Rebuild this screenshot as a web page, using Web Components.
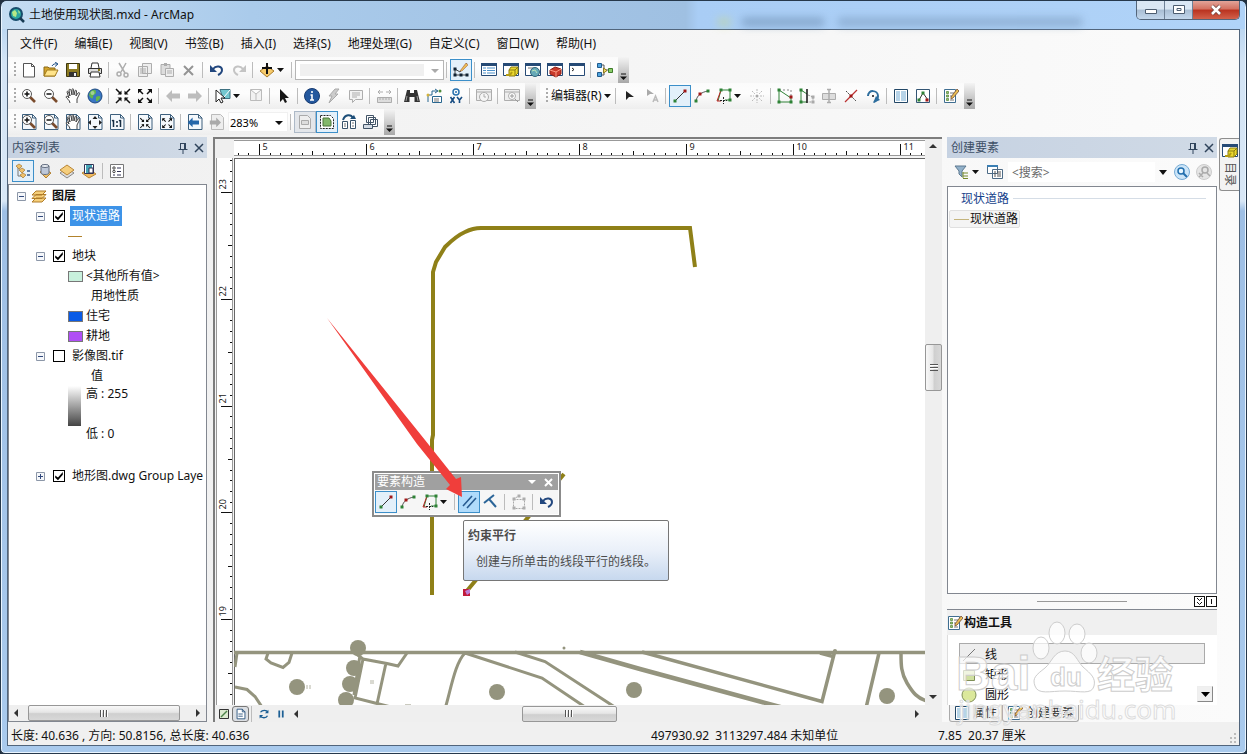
<!DOCTYPE html>
<html lang="zh-CN">
<head>
<meta charset="utf-8">
<title>土地使用现状图.mxd - ArcMap</title>
<style>
    html, body {
        margin: 0;
        height: 100%;
    }

    body {
        --line: #828790;
        --hot: #3c8fc9;
        --hot-bg: #e3f0fa;
        background: #22303f;
        color: #111;
        font: 12px/16px "Noto Sans", "Noto Sans CJK SC", sans-serif;
        overflow: hidden;
    }
</style>
</head>
<body>
<app-window heading="土地使用现状图.mxd - ArcMap">
    <menu-bar slot="menu" items="文件(F),编辑(E),视图(V),书签(B),插入(I),选择(S),地理处理(G),自定义(C),窗口(W),帮助(H)"></menu-bar>

    <tool-row slot="bars">
        <tool-bar>
            <tool-button icon="new" label="新建"></tool-button>
            <tool-button icon="open" label="打开"></tool-button>
            <tool-button icon="save" label="保存"></tool-button>
            <tool-button icon="print" label="打印"></tool-button>
            <tool-sep></tool-sep>
            <tool-button icon="cut" label="剪切"></tool-button>
            <tool-button icon="copy" label="复制"></tool-button>
            <tool-button icon="paste" label="粘贴"></tool-button>
            <tool-button icon="delete" label="删除"></tool-button>
            <tool-sep></tool-sep>
            <tool-button icon="undo" label="撤销"></tool-button>
            <tool-button icon="redo" label="恢复"></tool-button>
            <tool-sep></tool-sep>
            <tool-button icon="add" label="添加数据" menu></tool-button>
            <tool-sep></tool-sep>
            <combo-box label="比例" dim></combo-box>
            <tool-sep></tool-sep>
            <tool-button icon="editor" label="编辑器工具条" pressed></tool-button>
            <tool-sep></tool-sep>
            <tool-button icon="toc" label="内容列表"></tool-button>
            <tool-button icon="catalog" label="目录"></tool-button>
            <tool-button icon="search" label="搜索"></tool-button>
            <tool-button icon="toolbox" label="工具箱"></tool-button>
            <tool-button icon="python" label="命令行"></tool-button>
            <tool-sep></tool-sep>
            <tool-button icon="model" label="模型构建器"></tool-button>
        </tool-bar>
    </tool-row>

    <tool-row slot="bars">
        <tool-bar>
            <tool-button icon="zoomIn" label="放大"></tool-button>
            <tool-button icon="zoomOut" label="缩小"></tool-button>
            <tool-button icon="pan" label="平移"></tool-button>
            <tool-button icon="globe" label="全图"></tool-button>
            <tool-sep></tool-sep>
            <tool-button icon="fixIn" label="固定比例放大"></tool-button>
            <tool-button icon="fixOut" label="固定比例缩小"></tool-button>
            <tool-sep></tool-sep>
            <tool-button icon="back" label="上一视图"></tool-button>
            <tool-button icon="forward" label="下一视图"></tool-button>
            <tool-sep></tool-sep>
            <tool-button icon="select" label="选择要素" menu></tool-button>
            <tool-button icon="clear" label="清除选择"></tool-button>
            <tool-sep></tool-sep>
            <tool-button icon="pointer" label="选择元素"></tool-button>
            <tool-sep></tool-sep>
            <tool-button icon="info" label="识别"></tool-button>
            <tool-button icon="bolt" label="超链接"></tool-button>
            <tool-button icon="popup" label="弹出窗口"></tool-button>
            <tool-sep></tool-sep>
            <tool-button icon="measure" label="测量"></tool-button>
            <tool-sep></tool-sep>
            <tool-button icon="find" label="查找"></tool-button>
            <tool-button icon="route" label="查找路径"></tool-button>
            <tool-button icon="xy" label="转到坐标"></tool-button>
            <tool-sep></tool-sep>
            <tool-button icon="time" label="时间滑块"></tool-button>
            <tool-sep></tool-sep>
            <tool-button icon="viewer" label="查看器"></tool-button>
        </tool-bar>
        <tool-bar>
            <tool-button text="编辑器(R)" menu></tool-button>
            <tool-sep></tool-sep>
            <tool-button icon="editArrow" label="编辑工具"></tool-button>
            <tool-button icon="editText" label="编辑注记"></tool-button>
            <tool-sep></tool-sep>
            <tool-button icon="segment" label="直线段" pressed></tool-button>
            <tool-button icon="arc" label="弧段"></tool-button>
            <tool-button icon="trace" label="追踪" menu></tool-button>
            <tool-button icon="point" label="点"></tool-button>
            <tool-sep></tool-sep>
            <tool-button icon="vertices" label="编辑折点"></tool-button>
            <tool-button icon="reshape" label="整形"></tool-button>
            <tool-button icon="cutPoly" label="裁剪面"></tool-button>
            <tool-button icon="split" label="分割"></tool-button>
            <tool-button icon="rotate" label="旋转"></tool-button>
            <tool-sep></tool-sep>
            <tool-button icon="attrs" label="属性"></tool-button>
            <tool-button icon="sketch" label="草图属性"></tool-button>
            <tool-sep></tool-sep>
            <tool-button icon="create" label="创建要素"></tool-button>
        </tool-bar>
    </tool-row>

    <tool-row slot="bars">
        <tool-bar>
            <tool-button icon="pageIn" label="页面放大"></tool-button>
            <tool-button icon="pageOut" label="页面缩小"></tool-button>
            <tool-button icon="pagePan" label="页面平移"></tool-button>
            <tool-button icon="pageAll" label="整页"></tool-button>
            <tool-button icon="pageOne" label="百分之百"></tool-button>
            <tool-sep></tool-sep>
            <tool-button icon="pageFixIn" label="页面固定放大"></tool-button>
            <tool-button icon="pageFixOut" label="页面固定缩小"></tool-button>
            <tool-sep></tool-sep>
            <tool-button icon="pageBack" label="上一范围"></tool-button>
            <tool-button icon="pageForward" label="下一范围"></tool-button>
            <combo-box label="缩放" value="283%"></combo-box>
            <tool-sep></tool-sep>
            <tool-button icon="draft" label="草稿模式" held></tool-button>
            <tool-button icon="focus" label="焦点数据框" pressed></tool-button>
            <tool-button icon="layout" label="更改布局"></tool-button>
            <tool-button icon="driven" label="数据驱动页面"></tool-button>
        </tool-bar>
    </tool-row>

    <dock-panel slot="left" heading="内容列表">
        <layer-tree></layer-tree>
    </dock-panel>
    <map-view></map-view>
    <dock-panel slot="right" heading="创建要素">
        <feature-list></feature-list>
    </dock-panel>
    <side-tab slot="side" icon="catalog">目录</side-tab>
    <status-bar slot="status"></status-bar>
</app-window>

<script>
    // shared pieces of the 16x16 icons
    const SHEET = '<path d="M1.500.5h10l3.500 3.500v11.500h-13.500z" fill="#f4f8fc" stroke="#3c5f7d"/><path d="M11.500.5v3.500h3.500" fill="none" stroke="#3c5f7d"/>';
    const LENS = '<path d="M9 9l5 5" stroke="#7a4b2c" stroke-width="2.6"/><circle cx="6" cy="6" r="4.5" fill="#fff" stroke="#555"/>';
    const HAND = '<path d="M5 15c0-3-4-5-4-6s2-1 3 1L2 4c0-1 1-1 1.500 0L5 8 4 2c0-1 1.500-1 2 0l1 5V1.500c0-1 1.500-1 1.500 0L9 7l1-4c0-1 1.500-1 1.500 0L11 8l2-3c1-1 2 0 1.500 1L12 11v4" fill="#fff" stroke="#444"/>';
    const WINDOW = '<path d="M.5 1.500h15v12H.5z" fill="#fff" stroke="#264a75"/><path d="M0 1h16v3H0z" fill="#264a75"/>';
    const FIX_IN = '<path d="M1 1l5 5M15 1l-5 5M1 15l5-5M15 15l-5-5" stroke="#111" stroke-width="1.500"/><path d="M2.500 6.500h4v-4zM9.500 2.500v4h4zM2.500 9.500h4v4zM9.500 13.500v-4h4z" fill="#111"/>';
    const FIX_OUT = '<path d="M2 2l4 4M14 2l-4 4M2 14l4-4M14 14l-4-4" stroke="#111" stroke-width="1.500"/><path d="M1 1h4.500L1 5.500zM15 1v4.500L10.500 1zM1 15v-4.500L5.500 15zM15 15h-4.500l4.500-4.500z" fill="#111"/>';
    const ARROW_L = 'M1 8l6-6v3.500h8v5H7V14z';
    const ARROW_R = 'M15 8L9 2v3.500H1v5h8V14z';
    const small = (art) => `<g transform="translate(2.500 3.500) scale(.7)">${art}</g>`;
    const dot = (x, y, color) => `<path d="M${x - 1.5} ${y - 1.5}h3v3h-3z" fill="${color}"/>`;
    const G = '#2e8236';
    const R = '#a01717';
    const GREY = '#adadad';

    const ICONS = {
        app: '<circle cx="7" cy="7" r="6" fill="#2ca7a0" stroke="#174c6c" stroke-width="2"/><path d="M3 5l3-2 2 3-1 4-3-1zM9 3l2 2-1 2z" fill="#b8e986"/><path d="M11 11l4 4" stroke="#173a53" stroke-width="2.500"/>',
        new: '<path d="M2.500 1.500h8l3 3v10.500h-11z" fill="#fff" stroke="#555"/><path d="M10.500 1.500v3h3" fill="none" stroke="#555"/>',
        open: '<path d="M1 14V5h4l1 1h6v8z" fill="#d5a52b" stroke="#8a6817"/><path d="M1 14l3-6h11l-3 6z" fill="#ffe48a" stroke="#a17a1c"/><path d="M9 4c1-2 3-2.500 5-2M12 0l3 2-3 2.500" stroke="#1d4f87" fill="none"/>',
        save: '<path d="M1.500 1.500h13v13h-13z" fill="#8b7a22" stroke="#3d370f"/><path d="M4 2h8v5H4z" fill="#fff"/><path d="M4 10h8v5H4z" fill="#333"/><path d="M9 11h2v3H9z" fill="#eee"/>',
        print: '<path d="M4 6l1-5h6l1 5" fill="#fff" stroke="#333"/><path d="M1.500 6.500h13v5h-13z" fill="#ddd" stroke="#333"/><path d="M4 10h8l1 5H3z" fill="#fff" stroke="#333"/><path d="M11 8h2" stroke="#8a7a18" stroke-width="2"/>',
        cut: `<path d="M4 1l6 10M11 1L6 10" stroke="${GREY}" stroke-width="1.500"/><circle cx="4" cy="12" r="2" fill="none" stroke="${GREY}" stroke-width="1.500"/><circle cx="11" cy="13" r="2" fill="none" stroke="${GREY}" stroke-width="1.500"/>`,
        copy: `<path d="M5.500 1.500h9v10h-9zM1.500 4.500h9v10h-9z" fill="#eee" stroke="${GREY}"/><path d="M3 7h6M3 9h6M3 11h6" stroke="${GREY}"/>`,
        paste: `<path d="M2 2.500h9v10H2z" fill="#ddd" stroke="${GREY}" /><path d="M5 1h3v3H5z" fill="${GREY}"/><path d="M6.500 6.500h8v8h-8z" fill="#eee" stroke="${GREY}"/><path d="M8 9h5M8 11h5" stroke="${GREY}"/>`,
        delete: '<path d="M3 4l9 9M12 4l-9 9" stroke="#949494" stroke-width="2"/>',
        undo: '<path d="M4 7c3-4 9-3 9 1 0 3-2 4-4 5" fill="none" stroke="#22477e" stroke-width="2"/><path d="M1 3v7h7z" fill="#22477e"/>',
        redo: `<path d="M12 7C9 3 3 4 3 8c0 3 2 4 4 5" fill="none" stroke="#c4c4c4" stroke-width="2"/><path d="M15 3v7H8z" fill="#c4c4c4"/>`,
        add: '<path d="M1 9l7-5 7 5-7 6z" fill="#f7cb6b" stroke="#a97c2c"/><path d="M8 1v11M3 6h10" stroke="#111" stroke-width="2"/>',
        editor: '<path d="M2 7v6h12M2 7l5 3 7-9" fill="none" stroke="#444"/><path d="M7 9l6-8 2 2-6 6z" fill="#edbd55" stroke="#a26b4b" stroke-width=".6"/>' + dot(2, 7, '#123') + dot(2, 13, '#123') + dot(8, 13, '#123') + dot(14, 13, '#123'),
        toc: WINDOW + '<path d="M2 6h3M2 8.500h3M2 11h3M6 6h8M6 8.500h8M6 11h8" stroke="#4d91ca"/>',
        catalog: WINDOW + '<path d="M6 8l2-3h7v6l-3 3H6z" fill="#ead82e" stroke="#8a7d14"/><path d="M12 8v6M6 8h6l3-3" fill="none" stroke="#8a7d14"/><path d="M3 13h4l2-3" stroke="#b49d14" stroke-width="2" fill="none"/>',
        search: WINDOW + '<path d="M3 6h6" stroke="#777"/><circle cx="10" cy="10" r="4.500" fill="#67a9b7" stroke="#326578"/><path d="M7 9l3-1 2 3" stroke="#bce5b7" fill="none"/>',
        toolbox: WINDOW + '<path d="M3 8l5-3 6 2v5l-5 3-6-3z" fill="#c93a2b" stroke="#8a1f17"/><path d="M3 8l6 2 5-3M9 10v5" stroke="#fa9a82" fill="none"/>',
        python: WINDOW + '<path d="M3 6l2 1.500L3 9" stroke="#222" fill="none"/>',
        model: '<path d="M4 3h3v10H4M7 8h6" stroke="#555" fill="none"/><path d="M.5 1.500h4v4h-4zM.5 10.500h4v4h-4z" fill="#51a5df" stroke="#205b8c"/><path d="M6.500 6L10 8.500 6.500 11z" fill="#efd96a" stroke="#8d7a1e"/><path d="M11.500 6.500h4v4h-4z" fill="#8bcf6a" stroke="#3f7b2b"/>',
        zoomIn: LENS + '<path d="M3.500 6h5M6 3.500v5" stroke="#111" stroke-width="1.500"/>',
        zoomOut: LENS + '<path d="M3.500 6h5" stroke="#111" stroke-width="1.500"/>',
        pan: HAND,
        globe: '<circle cx="8" cy="8" r="7" fill="#3a76c4" stroke="#1e4a80"/><path d="M3 4c3-3 6-3 6 0s-3 2-3 5-3 1-4-2zM9 9c3-2 5-1 4 1s-3 4-4 3z" fill="#63b54c"/><circle cx="5.500" cy="5" r="2" fill="#fff" opacity=".4"/>',
        fixIn: FIX_IN,
        fixOut: FIX_OUT,
        back: `<path d="${ARROW_L}" fill="#bdbdbd"/>`,
        forward: `<path d="${ARROW_R}" fill="#bdbdbd"/>`,
        select: '<path d="M5 1.500h10v9H8z" fill="#73c7cf" stroke="#3e7181"/><path d="M9 9l6-7" stroke="#fff"/><path d="M1 2v12l3-3 2 4 2-1-2-4h4z" fill="#fff" stroke="#222"/>',
        clear: `<path d="M2.500 1.500h11v11h-11zM3 2l5 4 5-4M8 6v6" fill="#f2f2f2" stroke="#bbb"/>`,
        pointer: '<path d="M4 1v13l3-3 2 4 2-1-2-4h4z" fill="#151515"/>',
        info: '<circle cx="8" cy="8" r="7.500" fill="#24589e" stroke="#173b71"/><path d="M8 3v2M6.500 7H8v5M6 12h4" stroke="#fff" stroke-width="1.600" fill="none"/>',
        bolt: '<path d="M9 1h4L9 6h3L3 15l3-7H3z" fill="#ccc" stroke="#aaa"/>',
        popup: `<path d="M1.500 2.500h13v9h-7l-3 3v-3h-3z" fill="#f4f4f4" stroke="${GREY}"/><path d="M4 5h8M4 7h8M4 9h5" stroke="${GREY}"/>`,
        measure: `<path d="M1.500 9.500h14v5h-14z" fill="#ddd" stroke="${GREY}"/><path d="M4 10v2M7 10v2M10 10v2M13 10v2M2 4h5M10 4h5M4 2L2 4l2 2M13 2l2 2-2 2" stroke="${GREY}" fill="none"/>`,
        find: '<path d="M3 2h3v3h4V2h3l3 12h-5.500V9h-5v5H0z" fill="#333"/><path d="M3 8l-1 5M13 8l1 5" stroke="#999"/>',
        route: '<path d="M2 14V7h4V3h5M9 1l3 2-3 2" stroke="#28668f" fill="none"/><path d="M6.500 8.500h9v6h-9z" fill="#fff" stroke="#28668f"/><path d="M8 11h5M8 13h5" stroke="#777"/><circle cx="2" cy="7" r="1.500" fill="#d6b33b"/><circle cx="14" cy="3" r="1.500" fill="#4f8d3b"/>',
        xy: '<circle cx="8" cy="4" r="3" fill="none" stroke="#2871ae" stroke-width="1.500"/><circle cx="8" cy="4" r="1" fill="#2871ae"/><path d="M2.500 9l4 6M6.500 9l-4 6M9 9l2.500 3L14 9M11.500 12v3" stroke="#174c82" stroke-width="1.600" fill="none"/>',
        time: `<path d="M.5 1.500h15v11H.5zM1 4h14" fill="#eee" stroke="${GREY}"/><circle cx="8" cy="9" r="4.500" fill="#f5f5f5" stroke="${GREY}"/><path d="M8 6v3h2" stroke="${GREY}" fill="none"/>`,
        viewer: `<path d="M.5 1.500h15v11H.5zM1 4h14" fill="#eee" stroke="${GREY}"/><circle cx="8" cy="8" r="3.500" fill="#fff" stroke="${GREY}"/><path d="M6 8h4M8 6v4M11 11l3 3" stroke="#999"/>`,
        editArrow: '<path d="M4 3v9l3-3h5z" fill="#222"/>',
        editText: '<path d="M3 1v7l3-2h4z" fill="#aaa"/><path d="M9 14l2.500-6 2.500 6M10 12h3" stroke="#bbb" stroke-width="1.500" fill="none"/>',
        segment: '<path d="M3 13L13 3" stroke="#333"/>' + dot(3, 13, G) + dot(13, 3, R),
        arc: '<path d="M2 13C3 7 8 4 14 3" fill="none" stroke="#555"/>' + dot(2, 13, G) + dot(6, 6, R) + dot(14, 3, G),
        trace: `<path d="M2 13L5 2h9v10H9" fill="none" stroke="${G}"/><path d="M1 13L5 2" stroke="#b22"/><path d="M1 13h4" stroke="#b22"/><path d="M7.500 9v7M4 12.500h7" stroke="#222" stroke-dasharray="2 1"/>` + dot(5, 2, G) + dot(14, 2, G) + dot(14, 12, G),
        point: '<path d="M8 1v4M8 11v4M1 8h4M11 8h4M3 3l3 3M13 3l-3 3M3 13l3-3M13 13l-3-3" stroke="#bbb" stroke-dasharray="2 1"/><circle cx="8" cy="8" r="1.500" fill="#aaa"/>',
        vertices: `<path d="M14 10v4H2V2l12 8" fill="none" stroke="${G}"/><path d="M2 2h12v8" fill="none" stroke="#888" stroke-dasharray="2 2"/>` + dot(2, 2, G) + dot(2, 14, G) + dot(14, 14, G) + dot(14, 9, R),
        reshape: `<path d="M2 2v12h6M2 2l6 4" fill="none" stroke="${G}"/><path d="M8 1v14" stroke="#111" stroke-width="1.500"/><path d="M9 7l5 2v5H9" fill="none" stroke="#999" stroke-dasharray="2 1"/>` + dot(2, 2, G) + dot(2, 14, G) + dot(14, 9, '#aaa') + dot(14, 14, '#aaa'),
        cutPoly: `<path d="M1.500 5.500h13v6h-13z" fill="#ddd" stroke="${GREY}"/><path d="M8 1v14M6 1.500h4M6 14.500h4" stroke="${GREY}" stroke-width="1.500"/>`,
        split: '<path d="M2 14L14 2" stroke="#b33" stroke-width="1.300"/><path d="M3 3l10 10" stroke="#444" stroke-dasharray="2 1"/>' + dot(8, 8, R),
        rotate: '<path d="M3 8c0-7 10-6 10 0 0 3-2 5-4 6" fill="none" stroke="#2e6e9e" stroke-width="2"/><path d="M8 15l7-3-4-4z" fill="#2e6e9e"/><circle cx="8" cy="8" r="1" fill="#111"/>',
        attrs: '<path d="M1.500 1.500h13v13h-13z" fill="#fff" stroke="#224766"/><path d="M3 4h4M3 6h4M3 8h4M3 10h4M3 12h4M8 4h5M8 6h5M8 8h5M8 10h5M8 12h5" stroke="#6fa8d1"/>',
        sketch: '<path d="M1.500 1.500h13v13h-13z" fill="#fff" stroke="#335574"/><path d="M4 12l4-7 5 7" stroke="#333" fill="none"/>' + dot(4, 12, G) + dot(8, 5, G) + dot(12, 12, R),
        create: '<path d="M1.500 1.500h11v13h-11z" fill="#fff" stroke="#3f6e91"/><path d="M3.500 3.500h2v2h-2zM3.500 7h2v2h-2zM3.500 10.500h2v2h-2z" fill="#9ac86a" stroke="#4d7f37" stroke-width=".7"/><path d="M7 5h4M7 8h2M7 12h4" stroke="#777"/><path d="M8 9l6-8 2 2-6 7-2 1z" fill="#ebbe52" stroke="#704b36" stroke-width=".8"/>',
        pageIn: SHEET + LENS + '<path d="M3.500 6h5M6 3.500v5" stroke="#111" stroke-width="1.500"/>',
        pageOut: SHEET + LENS + '<path d="M3.500 6h5" stroke="#111" stroke-width="1.500"/>',
        pagePan: SHEET + HAND,
        pageAll: SHEET + '<path d="M8 2L5.500 5h5zM8 15l-2.500-3h5zM1 8.500L4 6v5zM15 8.500L12 6v5z" fill="#222"/>',
        pageOne: SHEET + '<path d="M4.500 6v7M3 7l1.500-1M11.500 6v7M10 7l1.500-1M8 7v2M8 11v2" stroke="#162c42" stroke-width="1.500"/>',
        pageFixIn: SHEET + small(FIX_IN),
        pageFixOut: SHEET + small(FIX_OUT),
        pageBack: SHEET + `<path d="${ARROW_L}" fill="#2466a9" transform="translate(0 2) scale(.8)"/>`,
        pageForward: `<path d="M2.500.5h9l3 3v12h-12z" fill="#eee" stroke="#bbb"/><path d="${ARROW_R}" fill="#aaa" transform="translate(0 2) scale(.8)"/>`,
        draft: '<path d="M2.500 1.500h8l3 3v10h-11z" fill="#eee" stroke="#aaa"/><path d="M4.500 6.500h7v4h-7z" fill="#ddd" stroke="#aaa"/>',
        focus: '<path d="M1.500 1.500h10l3 3v10h-13z" fill="#fff" stroke="#222" stroke-dasharray="2 1"/><path d="M4 4h6l2 3v5H4z" fill="#82b86a" stroke="#4b743b"/>',
        layout: '<path d="M1.500 7.500h5v7h-5zM9.500 6.500h5v8h-5z" fill="#fff" stroke="#39536b"/><path d="M3 10h2M11 9h2M3 12h2M11 12h2" stroke="#777"/><path d="M2 6c2-6 8-6 10-2" stroke="#1e4f79" stroke-width="2" fill="none"/><path d="M9 5h6l-2-4z" fill="#1e4f79"/>',
        driven: '<path d="M3.500 1.500h7v7h-7zM5.500 3.500h7v7h-7zM7.500 5.500h7v7h-7z" fill="#fff" stroke="#425467"/><path d="M.5 10.500h9v4h-9z" fill="#d4dce5" stroke="#425467"/>',
        byOrder: '<path d="M3 4v9h4M5 7h4" stroke="#777" fill="none"/><path d="M1 3l3-2 3 2-3 3zM4 7l3-2 3 2-3 3zM5 12l3-2 3 2-3 3z" fill="#efc16b" stroke="#a57834" stroke-width=".7"/><path d="M12 8h3M12 12h3" stroke="#355c8f" stroke-width="1.500"/>',
        bySource: '<path d="M3 9l5-3 6 4-5 5z" fill="#efc16b" stroke="#b38234"/><path d="M4 3v7c0 2 8 2 8 0V3" fill="#bdc7d8" stroke="#626c7f"/><ellipse cx="8" cy="3" rx="4" ry="1.500" fill="#eef2f7" stroke="#626c7f"/>',
        byVisible: '<path d="M1 10l7-5 7 5-7 5z" fill="#ddd" stroke="#888"/><path d="M1 7l7-5 7 5-7 5z" fill="#f5ce7d" stroke="#b98536"/>',
        bySelect: '<path d="M1 10l7-4 7 5-7 4z" fill="#f1bc61" stroke="#b98536"/><path d="M3.500 1.500h9v9h-9z" fill="#fff" stroke="#335"/><path d="M5 2h6v8H5z" fill="#46a5b7"/><path d="M8 5h4v5H8z" fill="#fff" stroke="#335"/>',
        options: '<path d="M1.500 1.500h13v13h-13z" fill="#fff" stroke="#777"/><circle cx="5" cy="5" r="1.200" fill="none" stroke="#444"/><circle cx="5" cy="8.500" r="1.200" fill="none" stroke="#444"/><path d="M4 12h2M8 5h4M8 8.500h4M8 12h4" stroke="#335"/>',
        group: '<path d="M1 14l4-4h10l-4 4zM1 10.500l4-4h10l-4 4zM1 7l4-4h10l-4 4z" fill="#f6cf7a" stroke="#b07d2a"/>',
        filter: '<path d="M1 2h11L8 7v6l-3-3V7z" fill="#92b1ca" stroke="#5d7990"/><path d="M9 8v6M9 9h5M9 12h5M9 14.500h5" stroke="#778a2c"/>',
        templates: '<path d="M.5 1.500h10v8H.5zM5.500 5.500h10v9h-10z" fill="#fff" stroke="#4d6b86"/><path d="M0 1h11v2H0z" fill="#3b7fb4"/><path d="M7 8h2M10 8h4M7 10h2M10 10h4M7 12h2M10 12h4" stroke="#555"/>',
        lens: '<circle cx="8" cy="8" r="7.500" fill="#cce5f8" stroke="#77abd4"/><circle cx="7" cy="7" r="3" fill="#e9f7ff" stroke="#226fae" stroke-width="1.500"/><path d="M9 9l4 4" stroke="#226fae" stroke-width="2"/>',
        noLens: '<circle cx="8" cy="8" r="7.500" fill="#e5e5e5" stroke="#ccc"/><circle cx="9" cy="6" r="3" fill="none" stroke="#aaa" stroke-width="1.500"/><path d="M11 9l3 3M3 9l4 4M7 9l-4 4" stroke="#aaa" stroke-width="1.500"/>',
        parallel: '<path d="M2 12L11 2M6 14L15 4" stroke="#285b91" stroke-width="1.600"/>',
        perpend: '<path d="M1 9L11 1M6 5l7 8" stroke="#2b6598" stroke-width="2"/>',
        finish: '<path d="M2.500 5.500h11v9h-11zM2 5l6-3" fill="none" stroke="#aaa" stroke-dasharray="2 1"/>' + dot(3, 5, GREY) + dot(13, 5, GREY) + dot(3, 14, GREY) + dot(13, 14, GREY) + dot(8, 2, GREY),
        pin: '<path d="M5.500 3v6M10.500 3v6M5 3.500h6M3.500 9.500h9M8 10v4M9.500 4v5" stroke="#30445c" fill="none"/>',
        close: '<path d="M4 4l8 8M12 4l-8 8" stroke="#30445c" stroke-width="1.500"/>',
        dataView: '<path d="M3.500 3.500h9v9h-9z" fill="#dcead0" stroke="#333"/><path d="M5 11l6-6" stroke="#4d8448" stroke-width="1.500"/>',
        pageView: '<path d="M3.500 2.500h6l3 3v8h-9z" fill="#fff" stroke="#234f7b"/><path d="M9.500 2.500v3h3M5 8h5M5 10.500h5" stroke="#234f7b" fill="none"/>',
        refresh: '<path d="M12.500 6C11 3 6 3 4 6M3.500 10c2 3 7 3 8.500 0" stroke="#1c5f94" stroke-width="1.500" fill="none"/><path d="M13 3v4H9zM3 13V9h4z" fill="#1c5f94"/>',
        pause: '<path d="M6 4v8M10 4v8" stroke="#1c5f94" stroke-width="2"/>',
        line: '<path d="M2 14L14 2" stroke="#777"/>',
        rect: '<path d="M2.500 3.500h11v10h-11z" fill="#cfe0a0" stroke="#7f8f58"/>',
        circle: '<circle cx="8" cy="8" r="7" fill="#dbe89b" stroke="#7f8f58"/>'
    };

    const svgIcon = (name, size = 16) =>
        `<svg width="${size}" height="${size}" viewBox="0 0 16 16" aria-hidden="true">${ICONS[name]}</svg>`;

    class UiElement extends HTMLElement {
        connectedCallback() {
            if (this.shadowRoot) return;
            this.attachShadow({ mode: 'open' });
            this.shadowRoot.innerHTML = this.render();
        }
    }

    class AppWindow extends UiElement {
        render() {
            return `
            <style>
                :host {
                    display: flex;
                    flex-direction: column;
                    box-sizing: border-box;
                    height: 100vh;
                    padding: 0 7px 7px;
                    border: 1px solid #26384b;
                    border-radius: 7px 7px 5px 5px;
                    background: linear-gradient(#a8cbee 0, #d3e4f5 60px, #d8e7f6 200px, #9ebfe5 210px, #a9caed 100%);
                    box-shadow: inset 0 0 0 1px #eaf5ff;
                    overflow: hidden;
                }
                .title {
                    display: flex;
                    align-items: center;
                    gap: 4px;
                    height: 28px;
                    flex: none;
                    margin: 0 -6px;
                    padding-left: 7px;
                    background: linear-gradient(90deg, #c4dcf2 0, #aacbeb 20%, #9fc0e2 55%, #a9cdf5 56%, #b0d3f8 100%);
                }
                h1 {
                    font: inherit;
                    margin: 0;
                    flex: 1;
                }
                .haze {
                    flex: 0 1 364px;
                    height: 8px;
                    margin: 14px 50px 0 0;
                    background: linear-gradient(90deg, #c8d890 0 12px, transparent 12px 24px, #6888ab 24px 106px, transparent 106px 120px, #7796b9 120px);
                    filter: blur(4px);
                    opacity: .6;
                }
                .controls {
                    display: flex;
                    align-self: flex-start;
                    margin-right: 5px;
                    border: 1px solid #53657a;
                    border-top: 0;
                    border-radius: 0 0 5px 5px;
                    overflow: hidden;
                }
                .controls button {
                    width: 28px;
                    height: 18px;
                    padding: 0;
                    border: 0;
                    border-right: 1px solid #6e8197;
                    background: linear-gradient(#dae7f4 45%, #a9bed4 50%, #c3d7ec);
                }
                .controls button:last-child {
                    width: 46px;
                    border: 0;
                    background: linear-gradient(#e2a499 0, #d3705f 45%, #b9321f 50%, #d2614b);
                }
                svg { display: block; margin: auto; }
                .title > svg { margin: 0; }
                .client {
                    display: flex;
                    flex-direction: column;
                    flex: 1;
                    min-height: 0;
                    border: 1px solid #51657c;
                    margin: 0 -1px;
                    background: linear-gradient(90deg, #f0f0f0, #f5f5f5 50%, #fbfbfb);
                }
                .bars { padding-bottom: 2px; }
                main {
                    display: flex;
                    flex: 1;
                    min-height: 0;
                }
                .left { flex: 0 0 199px; display: flex; min-width: 0; }
                .center { flex: 1; display: flex; min-width: 0; margin: 0 5px 0 6px; }
                .right { flex: 0 0 270px; display: flex; min-width: 0; }
                .side { flex: 0 0 20px; margin-left: 2px; }
            </style>
            <header class="title">
                ${svgIcon('app')}
                <h1>${this.getAttribute('heading')}</h1>
                <div class="haze"></div>
                <div class="controls">
                    <button aria-label="最小化"><svg width="14" height="12"><path d="M1.500 5.500h11v4h-11z" fill="#fff" stroke="#4d5d70"/></svg></button>
                    <button aria-label="最大化"><svg width="14" height="12"><path d="M1.500 1.500h11v8h-11zM5 4.500h4v2H5z" fill="#fff" stroke="#4d5d70"/></svg></button>
                    <button aria-label="关闭"><svg width="14" height="12"><path d="M3 2l8 8M11 2l-8 8" stroke="#71443f" stroke-width="4"/><path d="M3 2l8 8M11 2l-8 8" stroke="#fff" stroke-width="2.500"/></svg></button>
                </div>
            </header>
            <div class="client">
                <slot name="menu"></slot>
                <div class="bars"><slot name="bars"></slot></div>
                <main>
                    <div class="left"><slot name="left"></slot></div>
                    <div class="center"><slot></slot></div>
                    <div class="right"><slot name="right"></slot></div>
                    <div class="side"><slot name="side"></slot></div>
                </main>
                <slot name="status"></slot>
            </div>`;
        }
    }

    class MenuBar extends UiElement {
        render() {
            const items = this.getAttribute('items').split(',');
            return `
            <style>
                :host { display: block; }
                nav {
                    display: flex;
                    gap: 17px;
                    height: 27px;
                    align-items: center;
                    padding-left: 12px;
                }
                button {
                    padding: 0;
                    border: 0;
                    background: none;
                    font: inherit;
                    color: inherit;
                    white-space: nowrap;
                }
            </style>
            <nav>${items.map((t) => `<button>${t}</button>`).join('')}</nav>`;
        }
    }

    class ToolRow extends UiElement {
        render() {
            return `<style>:host { display: flex; gap: 4px; height: 26px; }</style><slot></slot>`;
        }
    }

    class ToolBar extends UiElement {
        render() {
            return `
            <style>
                :host {
                    display: flex;
                    align-items: center;
                    background: linear-gradient(#fbfbfb, #fdfdfd 40%, #eeeeee);
                }
                .grip {
                    width: 2px;
                    height: 16px;
                    margin: 0 2px 0 6px;
                    background: repeating-linear-gradient(#aaa 0 2px, transparent 2px 4px);
                }
                .more {
                    align-self: stretch;
                    width: 11px;
                    margin-left: 2px;
                    padding: 14px 0 0;
                    border: 0;
                    background: linear-gradient(#f4f4f4, #a8a8a8);
                }
                svg { display: block; margin: auto; }
            </style>
            <div class="grip"></div>
            <slot></slot>
            <button class="more" aria-label="工具条选项"><svg width="7" height="8"><path d="M1 1h5" stroke="#111"/><path d="M0 3.500h7L3.500 7z" fill="#111"/></svg></button>`;
        }
    }

    class ToolSep extends UiElement {
        render() {
            return `<style>:host { width: 1px; height: 16px; flex: none; margin: 0 3px 0 2px; background: #bcbcbc; }</style>`;
        }
    }

    class ToolButton extends UiElement {
        render() {
            const text = this.getAttribute('text');
            const arrow = this.hasAttribute('menu') ? '<svg class="arrow" width="7" height="4"><path d="M0 0h7L3.500 4z" fill="#111"/></svg>' : '';
            return `
            <style>
                :host { display: flex; flex: none; }
                button {
                    display: flex;
                    align-items: center;
                    box-sizing: border-box;
                    height: 22px;
                    padding: 0 2px;
                    border: 1px solid transparent;
                    background: none;
                    font: inherit;
                    color: inherit;
                    white-space: nowrap;
                }
                .text { padding: 0 1px 0 0; }
                .arrow { margin: 0 2px; }
                .text .arrow { margin: 0 0 0 2px; }
                :host([pressed]) button { border-color: var(--hot); background: var(--hot-bg); }
                :host([active]) button { border-color: var(--hot); background: #b0dbfb; }
                :host([held]) button { border-color: #adb9c7; background: #e3e6ea; }
            </style>
            <button class="${text ? 'text' : ''}" ${text ? '' : `aria-label="${this.getAttribute('label')}"`}>${text || svgIcon(this.getAttribute('icon'))}${arrow}</button>`;
        }
    }

    class ComboBox extends UiElement {
        render() {
            const value = this.getAttribute('value') ?? '';
            return `
            <style>
                :host { display: flex; position: relative; width: 60px; flex: none; }
                :host([dim]) { width: 149px; }
                select {
                    appearance: none;
                    box-sizing: border-box;
                    width: 100%;
                    height: 20px;
                    margin: 0;
                    padding: 0 1px;
                    border: 1px solid #f0f0f0;
                    border-radius: 0;
                    background: #fff;
                    font: 11px "Noto Sans", sans-serif;
                    color: #000;
                }
                :host([dim]) select { border-color: #b5b5b5; background: linear-gradient(90deg, #f0f0f0 0 124px, #fff 124px) 4px 3px / 140px 12px no-repeat #fff; }
                svg { position: absolute; right: 5px; top: 9px; pointer-events: none; }
            </style>
            <select aria-label="${this.getAttribute('label')}"><option>${value}</option></select>
            <svg width="8" height="4"><path d="M0 0h8L4 4z" fill="${this.hasAttribute('dim') ? '#aaa' : '#111'}"/></svg>`;
        }
    }

    class DockPanel extends UiElement {
        render() {
            return `
            <style>
                :host { display: flex; flex-direction: column; flex: 1; min-width: 0; }
                header {
                    display: flex;
                    align-items: center;
                    flex: none;
                    height: 21px;
                    padding: 0 0 0 4px;
                    background: linear-gradient(90deg, #c6d2e2, #d0dae6);
                    color: #3d4f66;
                }
                h2 { font: inherit; margin: 0; flex: 1; }
                button { width: 16px; height: 16px; padding: 0; border: 0; background: none; }
                svg { display: block; width: 16px; height: 16px; }
            </style>
            <header>
                <h2>${this.getAttribute('heading')}</h2>
                <button aria-label="自动隐藏">${svgIcon('pin')}</button>
                <button aria-label="关闭">${svgIcon('close')}</button>
            </header>
            <slot></slot>`;
        }
    }

    class ScrollBar extends UiElement {
        render() {
            const vertical = this.hasAttribute('vertical');
            const [before, after] = (this.getAttribute('range') ?? '1,1').split(',');
            const points = vertical ? ['M4 9h8L8 5z', 'M4 6h8l-4 4z'] : ['M9 4v8L5 8z', 'M6 4v8l4-4z'];
            return `
            <style>
                :host { display: flex; flex: 1; min-width: 0; min-height: 0; background: #efefef; }
                :host([vertical]) { flex-direction: column; }
                button { flex: none; width: 16px; height: 16px; padding: 0; border: 0; background: none; }
                svg { display: block; }
                .gap { flex: ${before} 1 0; }
                .gap.end { flex-grow: ${after}; }
                .thumb {
                    display: flex;
                    align-items: center;
                    justify-content: center;
                    box-sizing: border-box;
                    flex: 0 0 var(--thumb, 95px);
                    border: 1px solid #979797;
                    border-radius: 2px;
                    background: linear-gradient(#f8f8f8, #e6e6e6 45%, #cfcfcf 55%, #d8d8d8);
                }
                :host([vertical]) .thumb { background: linear-gradient(90deg, #f8f8f8, #e6e6e6 45%, #cfcfcf 55%, #d8d8d8); }
                .thumb::before {
                    content: "";
                    width: 8px;
                    height: 7px;
                    background: repeating-linear-gradient(${vertical ? '' : '90deg, '}#555 0 1px, #fff 1px 2px, transparent 2px 3px);
                }
            </style>
            <button aria-label="向前滚动"><svg width="16" height="16"><path d="${points[0]}" fill="#333"/></svg></button>
            <div class="gap"></div>
            <div class="thumb"></div>
            <div class="gap end"></div>
            <button aria-label="向后滚动"><svg width="16" height="16"><path d="${points[1]}" fill="#333"/></svg></button>`;
        }
    }

    class LayerTree extends UiElement {
        render() {
            const expander = (open) => `<button class="exp" aria-label="${open ? '折叠' : '展开'}"><svg width="9" height="9"><path d="M.5.5h8v8h-8z" fill="#f5f7fa" stroke="#8c97a8"/><path d="M2 4.500h5${open ? '' : 'M4.500 2v5'}" stroke="#334a7d"/></svg></button>`;
            const layer = (name, checked, open, cls = '') => `<li class="layer">${expander(open)}<label><input type="checkbox" ${checked ? 'checked' : ''}><span class="${cls}">${name}</span></label></li>`;
            const swatch = (name, color) => `<li class="class"><i style="background:${color}"></i><span>${name}</span></li>`;
            return `
            <style>
                :host { display: flex; flex-direction: column; flex: 1; min-height: 0; }
                .views { display: flex; flex: none; align-items: center; height: 26px; padding-left: 4px; }
                .box {
                    display: flex;
                    flex-direction: column;
                    flex: 1;
                    min-height: 0;
                    border: 1px solid var(--line);
                    background: #fff;
                }
                ul { list-style: none; margin: 0; padding: 1px 0 0; flex: 1; overflow: hidden; }
                li { display: flex; align-items: center; height: 20px; white-space: nowrap; }
                .root { padding-left: 8px; gap: 5px; font-weight: bold; }
                .layer { padding-left: 27px; gap: 8px; }
                .class { padding-left: 59px; gap: 3px; }
                .class i { box-sizing: border-box; width: 15px; height: 11px; border: 1px solid #777; }
                .head { padding-left: 82px; }
                label { display: flex; align-items: center; gap: 5px; }
                .exp { padding: 0; border: 0; background: none; }
                svg { display: block; }
                input {
                    appearance: none;
                    box-sizing: border-box;
                    width: 12px;
                    height: 12px;
                    margin: 0;
                    border: 1px solid #000;
                    background: #fff;
                }
                input:checked::before {
                    content: "";
                    display: block;
                    width: 10px;
                    height: 10px;
                    background: #000;
                    clip-path: polygon(12% 45%, 40% 65%, 88% 10%, 88% 38%, 40% 92%, 12% 68%);
                }
                label span { padding: 1px 2px; line-height: 18px; }
                .on { background: #3d93e8; color: #fff; }
                .symbol { padding-left: 59px; }
                .symbol i { width: 14px; height: 1px; background: #b2822c; }
                .ramp { align-items: stretch; height: 60px; padding-left: 59px; gap: 5px; }
                .ramp i { width: 13px; height: 40px; background: linear-gradient(#fff, #444); }
                .ramp div { display: flex; flex-direction: column; justify-content: space-between; height: 56px; }
                scroll-bar { flex: 0 0 16px; --thumb: 152px; }
            </style>
            <div class="views">
                <tool-button icon="byOrder" label="按绘制顺序列出" pressed></tool-button>
                <tool-button icon="bySource" label="按源列出"></tool-button>
                <tool-button icon="byVisible" label="按可见性列出"></tool-button>
                <tool-button icon="bySelect" label="按选择列出"></tool-button>
                <tool-sep></tool-sep>
                <tool-button icon="options" label="选项"></tool-button>
            </div>
            <div class="box">
                <ul>
                    <li class="root">${expander(true)}${svgIcon('group')}<span>图层</span></li>
                    ${layer('现状道路', true, true, 'on')}
                    <li class="symbol"><i></i></li>
                    ${layer('地块', true, true)}
                    ${swatch('&lt;其他所有值&gt;', '#c8f0dc')}
                    <li class="head">用地性质</li>
                    ${swatch('住宅', '#0a5be6')}
                    ${swatch('耕地', '#b04ff5')}
                    ${layer('影像图.tif', false, true)}
                    <li class="head">值</li>
                    <li class="ramp"><i></i><div><span>高 : 255</span><span>低 : 0</span></div></li>
                    <li></li>
                    ${layer('地形图.dwg Group Laye', true, false)}
                </ul>
                <scroll-bar range="1,4"></scroll-bar>
            </div>`;
        }
    }

    // ruler along the page edge: one label per unit, ten ticks between labels
    class MapRuler extends HTMLElement {
        connectedCallback() {
            if (this.shadowRoot) return;
            this.attachShadow({ mode: 'open' });
            this.shadowRoot.innerHTML = `
            <style>
                :host { display: block; overflow: hidden; min-width: 0; min-height: 0; position: relative; background: #f4f4f4; }
                svg { position: absolute; inset: 0; width: 100%; height: 100%; }
                path { stroke: #111; }
                text { font: 9px "Noto Sans", sans-serif; fill: #222; }
                rect { fill: #fff; stroke: #999; }
            </style>
            <svg></svg>`;
            new ResizeObserver(() => this.draw()).observe(this);
        }

        draw() {
            const vertical = this.hasAttribute('vertical');
            const first = Number(this.getAttribute('first'));
            const start = Number(this.getAttribute('start'));
            const length = vertical ? this.clientHeight : this.clientWidth;
            const unit = 106.8;
            const step = vertical ? -1 : 1;
            let art = vertical
                ? `<rect x="1.500" y="-2" width="16" height="${length + 4}"/>`
                : `<rect x="-2" y="1.500" width="${length + 4}" height="15"/>`;
            for (let i = -4; ; i++) {
                const p = Math.round(start + i * unit / 10) + 0.5;
                if (p < 0) continue;
                if (p > length) break;
                const len = i % 10 === 0 ? 11 : i % 5 === 0 ? 4 : 2;
                art += vertical ? `<path d="M${17 - len} ${p}h${len}"/>` : `<path d="M${p} ${16 - len}v${len}"/>`;
                if (i % 10 === 0) {
                    const n = first + step * i / 10;
                    art += vertical ? `<text transform="translate(11 ${p - 3}) rotate(-90)">${n}</text>` : `<text x="${p + 3}" y="11">${n}</text>`;
                }
            }
            this.shadowRoot.querySelector('svg').innerHTML = art;
        }
    }

    class MapCanvas extends UiElement {
        render() {
            return `
            <style>
                :host { display: block; position: relative; overflow: hidden; min-width: 0; min-height: 0; background: #fff; box-shadow: inset 1px 1px 0 #666; }
                svg { position: absolute; inset: 0; width: 100%; height: 100%; pointer-events: none; }
                .cad { fill: none; stroke: #94947e; stroke-width: 3; }
                .trees { fill: #94947e; }
                .road { fill: none; stroke: #8f8018; stroke-width: 4; }
                construct-bar { position: absolute; left: 138px; top: 313px; }
                help-tip { position: absolute; left: 229px; top: 362px; }
            </style>
            <svg>
                <g transform="translate(-234 -158)">
                    <g class="cad">
                        <path d="M234 652.500h2000" stroke-width="3.500"/>
                        <path d="M237 653L235 667M268 653l-2 6 5 4 12 4.500 6-5 3-9.500M235 687l12 2.500 8 7 8 12"/>
                        <path d="M355 653l8 6 24 4.500 11 2.500 9-13M363 659l-8 39 22 5.500 12 3M386 663l-9 41M360 655l-6 40"/>
                        <path d="M465 653c-10 10-14 36-20 56M465 653l77 25 46 31M515 652l30 9.500 72 47"/>
                        <path d="M580 652l60 17 144 39" stroke-width="4.500"/>
                        <path d="M642 652l180 49.500 13-51M820 653l15 4M879 653l-13 55M901 653c0 12 0 20 6 30s10 15 20 18" stroke-width="3.500"/>
                        <path d="M405 706h6"/>
                        <path d="M307 685v4M310 685v4M370 681h4M370 683h4" stroke-width="1" opacity=".7"/>
                    </g>
                    <g class="trees">
                        <circle cx="297" cy="687" r="8"/><circle cx="358" cy="648" r="8"/>
                        <circle cx="354" cy="668" r="8"/><circle cx="350" cy="684" r="8"/>
                        <circle cx="346" cy="700" r="8"/><circle cx="497" cy="692" r="8"/>
                        <circle cx="634" cy="690" r="8"/><circle cx="887" cy="696" r="8"/>
                        <circle cx="564" cy="648" r="1.500"/><circle cx="835" cy="651" r="2"/>
                    </g>
                    <path class="road" d="M432 595V440l1-5V272l3-10 9-15q11-11 20-15 8-4 16-4h209l5 39M466 592l98-118"/>
                    <path d="M463 589h7v7h-7z" fill="#c11a3a"/><path d="M465 591l5-2v4l-3 2z" fill="#bd7fd8"/>
                </g>
            </svg>
            <construct-bar></construct-bar>
            <help-tip heading="约束平行">创建与所单击的线段平行的线段。</help-tip>
            <svg>
                <path transform="translate(-234 -158)" fill="#f03e3b" d="M327 318l98 122 31 39 5-2 1 20-16-8 4-4-33-41z"/>
            </svg>`;
        }
    }

    class ConstructBar extends UiElement {
        render() {
            return `
            <style>
                :host { display: block; border: 2px solid #8b8b8b; background: #fff; padding: 1px; }
                header { display: flex; align-items: center; height: 16px; padding: 0 1px 0 2px; background: #a0a0a0; color: #fff; }
                h3 { font: inherit; margin: 0; flex: 1; }
                button { display: flex; width: 17px; padding: 0; justify-content: center; border: 0; background: none; }
                div { display: flex; align-items: center; height: 24px; background: #f6f6f6; }
            </style>
            <header>
                <h3>要素构造</h3>
                <button aria-label="选项"><svg width="8" height="4"><path d="M0 0h8L4 4z" fill="#fff"/></svg></button>
                <button aria-label="关闭"><svg width="9" height="9"><path d="M1 1l7 7M8 1L1 8" stroke="#fff" stroke-width="2"/></svg></button>
            </header>
            <div>
                <tool-button icon="segment" label="直线段" pressed></tool-button>
                <tool-button icon="arc" label="弧段"></tool-button>
                <tool-button icon="trace" label="追踪" menu></tool-button>
                <tool-sep></tool-sep>
                <tool-button icon="parallel" label="约束平行" active></tool-button>
                <tool-button icon="perpend" label="约束垂直"></tool-button>
                <tool-sep></tool-sep>
                <tool-button icon="finish" label="完成草图"></tool-button>
                <tool-sep></tool-sep>
                <tool-button icon="undo" label="撤销"></tool-button>
            </div>`;
        }
    }

    class HelpTip extends UiElement {
        render() {
            return `
            <style>
                :host {
                    display: block;
                    box-sizing: border-box;
                    width: 206px;
                    padding: 7px 4px 10px;
                    border: 1px solid #767676;
                    border-radius: 2px;
                    background: linear-gradient(#fff, #eaf0f9 50%, #c7d8ee);
                    color: #4c4c4c;
                }
                strong { display: block; margin-bottom: 10px; font-weight: 600; }
                p { margin: 0 0 0 8px; white-space: nowrap; }
            </style>
            <strong>${this.getAttribute('heading')}</strong>
            <p><slot></slot></p>`;
        }
    }

    class MapView extends UiElement {
        render() {
            return `
            <style>
                :host {
                    display: grid;
                    flex: 1;
                    min-width: 0;
                    grid-template: 19px minmax(0, 1fr) 17px / 19px minmax(0, 1fr) 17px;
                    border: 2px solid #7d7d7d;
                    border-right: 0;
                    border-bottom: 0;
                    background: #efefef;
                }
                .foot { grid-column: 1 / 3; display: flex; align-items: center; }
                .foot button { box-sizing: border-box; width: 17px; height: 16px; padding: 0; border: 0; background: none; }
                .foot .on { border: 1px solid #777; border-radius: 3px; background: #dcdfe3; }
                .foot svg { display: block; margin: auto; }
                scroll-bar[vertical] { grid-row: 1 / 3; grid-column: 3; --thumb: 47px; }
            </style>
            <div></div>
            <map-ruler first="5" start="25"></map-ruler>
            <scroll-bar vertical range="189,299"></scroll-bar>
            <map-ruler vertical first="23" start="34"></map-ruler>
            <map-canvas></map-canvas>
            <div class="foot">
                <button aria-label="数据视图">${svgIcon('dataView')}</button>
                <button class="on" aria-label="布局视图">${svgIcon('pageView', 14)}</button>
                <tool-sep></tool-sep>
                <button aria-label="刷新">${svgIcon('refresh', 14)}</button>
                <button aria-label="暂停绘制">${svgIcon('pause', 14)}</button>
                <scroll-bar range="216,291"></scroll-bar>
            </div>
            <div></div>`;
        }
    }

    class FeatureList extends UiElement {
        render() {
            return `
            <style>
                :host { display: flex; flex-direction: column; flex: 1; min-height: 0; }
                .find { display: flex; align-items: center; flex: none; height: 28px; padding: 0 2px 0 4px; }
                input {
                    flex: 1;
                    min-width: 0;
                    height: 20px;
                    box-sizing: border-box;
                    margin-left: 2px;
                    padding: 0 4px;
                    border: 0;
                    background: #fff;
                    font: inherit;
                }
                input::placeholder { color: #6a6a6a; opacity: 1; }
                .drop { display: flex; justify-content: center; align-items: center; width: 16px; height: 16px; padding: 0; border: 0; background: none; }
                .list { flex: 1; min-height: 0; border: 1px solid var(--line); background: #fff; }
                h3 {
                    display: flex;
                    align-items: center;
                    gap: 4px;
                    height: 23px;
                    margin: 0 10px 0 13px;
                    font: inherit;
                    color: #15428b;
                }
                h3::after { content: ""; flex: 1; height: 1px; background: #d5dde6; }
                .item {
                    display: flex;
                    align-items: center;
                    gap: 1px;
                    height: 18px;
                    margin: 0 0 0 1px;
                    padding: 0 1px 0 4px;
                    border: 1px solid #e0e0e0;
                    border-radius: 2px;
                    background: #f4f4f4;
                    font: inherit;
                    color: inherit;
                }
                .item i { width: 15px; height: 1px; background: #c4b47c; }
                .split { display: flex; align-items: center; justify-content: flex-end; gap: 1px; height: 15px; flex: none; }
                .split i { width: 90px; height: 1px; margin-right: 66px; background: #999; }
                .split button { box-sizing: border-box; width: 11px; height: 11px; padding: 0; border: 1px solid #111; background: #fff; }
                .split svg, .down svg { display: block; margin: auto; }
                .tools { position: relative; flex: none; height: 113px; border-top: 1px solid var(--line); box-sizing: border-box; }
                h4 { display: flex; align-items: center; gap: 1px; height: 25px; margin: 0; padding-top: 1px; box-sizing: border-box; background: #f0f0f0; }
                .kinds {
                    display: flex;
                    align-items: flex-end;
                    height: 70px;
                    padding: 0 4px 0 11px;
                    box-sizing: border-box;
                    background: #fff;
                    border-left: 1px solid #ddd;
                }
                ul { list-style: none; flex: 1; margin: 0; padding: 8px 0 0; align-self: flex-start; }
                li { display: flex; align-items: center; gap: 8px; height: 20px; padding: 2px 0 0 2px; box-sizing: border-box; }
                li.on { height: 21px; padding: 2px 0 0 1px; border: 1px solid #aaa; background: #eee; }
                .down { width: 16px; height: 16px; margin: 0 0 3px -8px; padding: 0; border: 1px solid #aaa; border-color: #eee #888 #888 #eee; background: #f0f0f0; }
                .tabs { display: flex; align-items: stretch; height: 17px; padding-left: 2px; }
                .tabs button {
                    display: flex;
                    align-items: center;
                    gap: 3px;
                    padding: 0 4px;
                    border: 1px solid #aaa;
                    border-top: 0;
                    border-radius: 0 0 3px 3px;
                    background: #f3f3f3;
                    font: inherit;
                    color: #333;
                }
                brand-mark { position: absolute; left: 0; top: 0; }
            </style>
            <div class="find">
                <tool-button icon="filter" label="组织模板" menu></tool-button>
                <tool-button icon="templates" label="管理模板"></tool-button>
                <input type="text" aria-label="搜索" placeholder="&lt;搜索&gt;">
                <button class="drop" aria-label="搜索选项"><svg width="8" height="5"><path d="M0 0h8L4 5z" fill="#111"/></svg></button>
                <tool-button icon="lens" label="开始搜索"></tool-button>
                <tool-button icon="noLens" label="清除搜索"></tool-button>
            </div>
            <div class="list">
                <h3>现状道路</h3>
                <button class="item"><i></i>现状道路</button>
            </div>
            <div class="split">
                <i></i>
                <button aria-label="折叠"><svg width="7" height="9"><path d="M1 1l2.500 2.500L6 1M1 5l2.500 2.500L6 5" stroke="#111" fill="none"/></svg></button>
                <button aria-label="停靠"><svg width="7" height="9"><path d="M3.500 2v5" stroke="#111"/></svg></button>
            </div>
            <section class="tools">
                <h4>${svgIcon('create')}构造工具</h4>
                <div class="kinds">
                    <ul>
                        <li class="on">${svgIcon('line')}线</li>
                        <li>${svgIcon('rect')}矩形</li>
                        <li>${svgIcon('circle')}圆形</li>
                    </ul>
                    <button class="down" aria-label="向下滚动"><svg width="9" height="5"><path d="M0 0h9L4.500 5z" fill="#000"/></svg></button>
                </div>
                <div class="tabs">
                    <button>${svgIcon('attrs')}属性</button>
                    <button>${svgIcon('create')}创建要素</button>
                </div>
                <brand-mark></brand-mark>
            </section>`;
        }
    }

    class BrandMark extends UiElement {
        render() {
            return `
            <style>
                :host { display: block; pointer-events: none; }
                svg { display: block; overflow: visible; }
                g { fill: #fff; fill-opacity: .7; stroke: #cdcdcd; stroke-width: 1; }
                text { font-family: "Liberation Sans", "Noto Sans CJK SC", sans-serif; font-weight: bold; }
                .site { font: 26px "Noto Sans", sans-serif; stroke: #ddd; }
            </style>
            <svg width="240" height="112">
                <g>
                    <text x="9" y="80" font-size="48">Bai</text>
                    <ellipse cx="110" cy="23" rx="8" ry="11"/>
                    <ellipse cx="130" cy="24" rx="8" ry="10"/>
                    <ellipse cx="94" cy="38" rx="8" ry="11"/>
                    <ellipse cx="142" cy="43" rx="8" ry="10"/>
                    <path d="M118 41c-11 0-13 11-20 17-9 7-13 10-10 18 3 9 15 5 30 5s27 4 29-5c2-8-3-12-11-19-6-6-8-16-18-16z"/>
                    <text x="103" y="76" font-size="26">du</text>
                    <text x="150" y="78" font-size="38">经验</text>
                    <text class="site" x="11" y="109">jingyanbaidu.com</text>
                </g>
            </svg>`;
        }
    }

    class SideTab extends UiElement {
        render() {
            return `
            <style>
                :host { display: block; padding-top: 1px; }
                button {
                    display: flex;
                    flex-direction: column;
                    align-items: center;
                    gap: 3px;
                    width: 20px;
                    padding: 4px 0;
                    border: 1px solid #8e8e8e;
                    border-right: 0;
                    border-radius: 3px 0 0 3px;
                    background: #f3f3f3;
                    font: inherit;
                    color: #555;
                }
                span { writing-mode: vertical-rl; text-orientation: sideways; }
            </style>
            <button>${svgIcon(this.getAttribute('icon'))}<span><slot></slot></span></button>`;
        }
    }

    class StatusBar extends UiElement {
        render() {
            return `
            <style>
                :host {
                    display: grid;
                    grid-template-columns: 640px 1fr 289px 12px;
                    align-items: end;
                    flex: none;
                    box-sizing: border-box;
                    height: 23px;
                    padding: 0 0 1px 3px;
                    background: #f0f0f0;
                    white-space: pre;
                }
            </style>
            <span>长度: 40.636 , 方向: 50.8156, 总长度: 40.636</span>
            <span>497930.92  3113297.484 未知单位</span>
            <span>7.85  20.37 厘米</span>
            <svg width="10" height="12"><path d="M7 1h2v2H7zM7 5h2v2H7zM7 9h2v2H7zM3 5h2v2H3zM3 9h2v2H3z" fill="#bbb"/></svg>`;
        }
    }

    customElements.define('app-window', AppWindow);
    customElements.define('menu-bar', MenuBar);
    customElements.define('tool-row', ToolRow);
    customElements.define('tool-bar', ToolBar);
    customElements.define('tool-sep', ToolSep);
    customElements.define('tool-button', ToolButton);
    customElements.define('combo-box', ComboBox);
    customElements.define('dock-panel', DockPanel);
    customElements.define('scroll-bar', ScrollBar);
    customElements.define('layer-tree', LayerTree);
    customElements.define('map-ruler', MapRuler);
    customElements.define('map-canvas', MapCanvas);
    customElements.define('construct-bar', ConstructBar);
    customElements.define('help-tip', HelpTip);
    customElements.define('map-view', MapView);
    customElements.define('feature-list', FeatureList);
    customElements.define('brand-mark', BrandMark);
    customElements.define('side-tab', SideTab);
    customElements.define('status-bar', StatusBar);
</script>
</body>
</html>
